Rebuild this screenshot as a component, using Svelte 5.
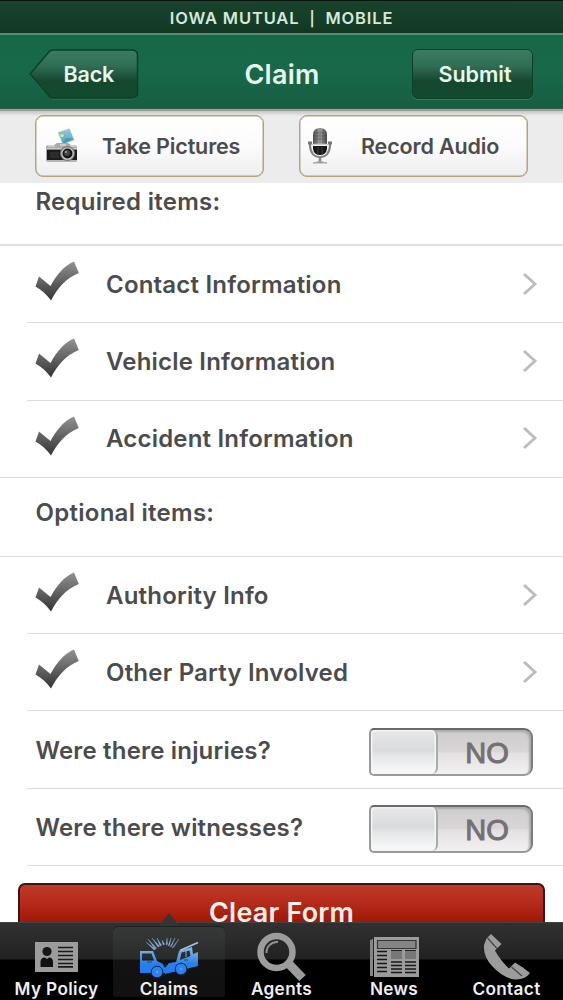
<script>
  const required = ['Contact Information', 'Vehicle Information', 'Accident Information'];
  const optional = ['Authority Info', 'Other Party Involved'];
  const questions = ['Were there injuries?', 'Were there witnesses?'];
  const rays = [[146, 942, 154, 950], [148, 939, 155, 949], [152, 938, 158, 947], [157, 938, 160, 946], [162, 940, 163, 945], [167, 938, 166, 945], [171, 938, 168, 946], [175, 938, 170, 947], [179, 939, 172, 948]];
</script>

{#snippet check()}
  <svg class="check" width="44" height="40" viewBox="0 0 44 40">
    <defs>
      <linearGradient id="ck" x1="0" y1="0" x2="0" y2="1">
        <stop offset="0" stop-color="#929292" /><stop offset=".45" stop-color="#686868" /><stop offset="1" stop-color="#353335" />
      </linearGradient>
    </defs>
    <path fill="url(#ck)" d="M4 15.500 15.500 25C22 13 29 5 39 .5L43.800 12C31 17 22 28 16 39.500 12 34 7 29 .5 25.500Z" />
  </svg>
{/snippet}

{#snippet row(label)}
  <div class="row">
    {@render check()}
    <span class="label">{label}</span>
    <svg class="chev" width="16" height="24" viewBox="0 0 16 24"><path d="M2 2 13 12 2 22" fill="none" stroke="#bcbcbe" stroke-width="2.900" /></svg>
  </div>
{/snippet}

<div class="app">
  <div class="status"><span>IOWA MUTUAL&nbsp; <i>|</i>&nbsp; MOBILE</span></div>
  <header>
    <button class="back">
      <svg width="110" height="52" viewBox="0 0 110 52">
        <defs>
          <linearGradient id="bk" x1="0" y1="0" x2="0" y2="1">
            <stop offset="0" stop-color="#3c7c61" /><stop offset=".32" stop-color="#316f55" /><stop offset=".65" stop-color="#16472f" /><stop offset="1" stop-color="#124a30" />
          </linearGradient>
        </defs>
        <path d="M24 3H102Q108.500 3 108.500 8V46Q108.500 51 102 51H24Q21 51 19 48L1 27 19 6Q21 3 24 3Z" fill="none" stroke="#33805f" />
        <path d="M24 2H102Q108.500 2 108.500 7V45Q108.500 50 102 50H24Q21 50 19 47L1 26 19 5Q21 2 24 2Z" fill="url(#bk)" stroke="#0d4029" stroke-width="1.500" />
      </svg>
      <span>Back</span>
    </button>
    <h1>Claim</h1>
    <button class="submit"><span>Submit</span></button>
  </header>

  <div class="tools">
    <button class="tool">
      <svg class="cam" width="34" height="38" viewBox="0 0 34 38">
        <defs><linearGradient id="sky" x1="0" y1="0" x2="0" y2="1"><stop offset="0" stop-color="#9fc7dc" /><stop offset="1" stop-color="#42a7d5" /></linearGradient></defs>
        <path d="M12 5 25 .5 30 14.500 18 18Z" fill="#f1f1ee" />
        <path d="M13 5.500 24.500 1.500 29 13 18 17Z" fill="url(#sky)" />
        <circle cx="17" cy="8.500" r="1.800" fill="#dce778" /><path d="M18 15 21 11 29 11.500 19 16Z" fill="#4a9aae" />
        <path d="M1 20Q1 18 4 18H9L12 16H23L26 18H30Q32 18 32 21V33Q32 35 29 35H4Q1 35 1 33Z" fill="#aaa" />
        <path d="M2 22H32V33H2Z" fill="#1c1c1c" />
        <path d="M2 22H32M3 19H10M25 19H31M15 18H21" stroke="#eee" stroke-width="1" />
        <path d="M5 25H14V31H5Z" fill="#2d2d2d" /><path d="M2 34H32" stroke="#bdbdbd" stroke-width="1.500" />
        <circle cx="22.500" cy="26.500" r="7.500" fill="#777" /><circle cx="22.500" cy="26.500" r="6.300" fill="#c9c9c9" />
        <circle cx="22.500" cy="26.500" r="5" fill="#151515" /><circle cx="22" cy="26" r="3" fill="#46434a" /><circle cx="21" cy="25" r="1" fill="#aaa" />
      </svg>
      <span>Take Pictures</span>
    </button>
    <button class="tool">
      <svg class="mic" width="24" height="38" viewBox="0 0 24 38">
        <defs><linearGradient id="mc" x1="0" x2="1"><stop offset="0" stop-color="#4c4c4c" /><stop offset=".5" stop-color="#aaa" /><stop offset="1" stop-color="#444" /></linearGradient></defs>
        <path d="M2 17V19Q3 30 12 30T22 19V17" fill="none" stroke="#858585" stroke-width="2.200" />
        <path d="M0 16H4M20 16H24" stroke="#777" stroke-width="3" />
        <path d="M5 8Q5 1 12 1T19 8V17H5Z" fill="url(#mc)" />
        <path d="M6 6H18M5 9H19M5 12H19M9 2V16M12 1V16M15 2V16" stroke="#444" stroke-opacity=".45" />
        <path d="M5 19H19V22Q18 28 12 28T5 22Z" fill="#171717" /><path d="M4 17.500H20" stroke="#ccc" stroke-width="1.500" />
        <path d="M10 20V27M14 20V27" stroke="#444" /><path d="M12 29V35" stroke="#888" stroke-width="2.500" />
        <path d="M5 36Q12 33 19 36Z" fill="#777" stroke="#aaa" />
      </svg>
      <span>Record Audio</span>
    </button>
  </div>

  <main>
    <h2 class="req"><span>Required items:</span></h2>
    {#each required as label}{@render row(label)}{/each}
    <h2 class="opt"><span>Optional items:</span></h2>
    {#each optional as label}{@render row(label)}{/each}
    {#each questions as label}
      <div class="row question">
        <span class="label">{label}</span>
        <div class="switch"><i></i><b>NO</b></div>
      </div>
    {/each}
    <div class="clear-wrap"><button class="clear"><span>Clear Form</span></button></div>
  </main>

  <nav>
    <a class="tab">
      <svg viewBox="0 922 113 56" width="113" height="56">
        <path d="M35 942H78V972H35Z" fill="#9c9c9c" />
        <circle cx="47" cy="951.500" r="4.600" fill="#171717" /><path d="M40.500 967V962Q40.500 957.500 45 957.500L47 959 49 957.500Q53 957.500 53 962V967Z" fill="#111" />
        <path d="M58 947.500H73M58 951.500H73M58 955.500H73M58 959.500H73M58 963.500H73M58 966.800H73" stroke="#1a1a1a" stroke-width="1.700" />
      </svg>
      <span>My Policy</span>
    </a>
    <a class="tab active">
      <i class="notch"></i>
      <svg viewBox="113 922 112 56" width="112" height="56">
        <defs><linearGradient id="blue" gradientUnits="userSpaceOnUse" x1="0" y1="937" x2="0" y2="978"><stop offset="0" stop-color="#b5d2ef" /><stop offset=".45" stop-color="#609fe0" /><stop offset=".65" stop-color="#2580e8" /><stop offset="1" stop-color="#2478ef" /></linearGradient></defs>
        <g fill="url(#blue)">
          {#each rays as r}
            <path d="M{r[0]} {r[1]} {r[2]} {r[3]} {r[2] + 1.600} {r[3] - .800}Z" stroke="#7798bb" stroke-width=".4" />
          {/each}
          <path fill-rule="evenodd" d="M140 951H153L157 961 163 964 164 967 168 969 165 973H140ZM142 953.500V960.500H154L151.500 953.500Z" />
          <path fill-rule="evenodd" d="M179 951 192 947 193 954 198 952V966L165 974 164 969 169 963 176 962ZM181.500 952.500 180 960 190.500 956 189.500 950.500Z" />
        </g>
        <path d="M180 950.500 198 942.500" fill="none" stroke="#9fc4e8" stroke-width="1.800" />
        <path d="M186 951V957" stroke="#81addd" /><path d="M147 962H152M184 960H188" stroke="#164883" />
        <circle cx="157" cy="972" r="5.800" fill="#2880f2" stroke="#142a49" /><circle cx="157" cy="972" r="1.300" fill="#59a4fa" />
        <circle cx="181" cy="969" r="5.800" fill="#2880f2" stroke="#142a49" /><circle cx="181" cy="969" r="1.300" fill="#59a4fa" />
      </svg>
      <span>Claims</span>
    </a>
    <a class="tab">
      <svg viewBox="225 922 113 60" width="113" height="60">
        <circle cx="276.500" cy="952" r="16" fill="none" stroke="#9c9c9c" stroke-width="6.500" />
        <path d="M266.500 953A10.500 10.500 0 0 1 278 942" fill="none" stroke="#929292" stroke-width="2" />
        <path d="M289 964 302.500 978" stroke="#9c9c9c" stroke-width="9" />
      </svg>
      <span>Agents</span>
    </a>
    <a class="tab">
      <svg viewBox="338 922 112 56" width="112" height="56">
        <path d="M370 940 373 939V976H370Z" fill="#858585" /><path d="M374 937H419V977H374Z" fill="#9c9c9c" />
        <path d="M377.500 940.500H416V948.500H377.500Z" fill="#858585" stroke="#353535" stroke-width="1.200" />
        <path d="M391 951H402V959H391ZM405 951H416V959H405Z" fill="#787878" />
        <path d="M377 951.500H387M377 955.500H387M377 959.500H387M377 963.500H387M377 967.500H387M377 971.500H387M391 962H402M391 965.500H402M391 969H402M391 972.500H402M405 962H416M405 965.500H416M405 969H416M405 972.500H416" stroke="#171717" stroke-width="1.600" />
        <path d="M391 950.500H402M405 950.500H416" stroke="#222" />
      </svg>
      <span>News</span>
    </a>
    <a class="tab">
      <svg viewBox="450 922 113 60" width="113" height="60">
        <path d="M486.500 938.500 491 934 501.500 944 495 950.500Q500 960 509 968.500L515 962.500Q523 967 530 973 525 980 515 979.500 503 978 492 966 483 956 484 945Z" fill="#9c9c9c" />
        <path d="M487.500 938 497 948.500M511.500 967 522 976" stroke="#484848" stroke-width="1.300" />
      </svg>
      <span>Contact</span>
    </a>
  </nav>
</div>

<style>
  :global(body) { background: #fff; }
  .app { width: 563px; height: 1000px; display: flex; flex-direction: column; overflow: hidden; background: #fff; font-family: Inter, sans-serif; color: #4c4b4d; font-weight: 600; }
  button { font: inherit; color: inherit; padding: 0; border: 0; background: none; box-sizing: border-box; }
  span { white-space: nowrap; }
  .status { height: 33px; flex: none; display: flex; justify-content: center; align-items: center; box-sizing: border-box; padding-top: 2px; border-top: 1px solid #07150e; background: linear-gradient(#19432d, #123824); color: #d5e8da; font-size: 16.500px; letter-spacing: .85px; }
  .status i { font-style: normal; font-size: 14.500px; }
  header { height: 76px; flex: none; box-sizing: border-box; border-top: 2px solid #578d75; border-bottom: 1px solid #315f4a; background: linear-gradient(#176846, #18694a 45%, #175d41); display: grid; grid-template-columns: 139px 1fr 121px; padding: 13px 29px 0; color: #e7f7eb; }
  .back { display: grid; width: 110px; height: 52px; }
  .back svg, .back span { grid-area: 1 / 1; }
  .back span { padding: 12px 0 0 34.500px; text-align: left; font-size: 21.500px; letter-spacing: -.15px; line-height: 28px; }
  h1 { margin: 0; font-size: 27px; line-height: 54px; text-align: center; font-weight: 600; padding-right: 17px; letter-spacing: .25px; }
  .submit { width: 121px; height: 50px; margin: 1px 0 0 -1px; border-radius: 6px; border: 1.500px solid #0d4029; background: linear-gradient(#3c7c61, #316f55 32%, #16472f 65%, #124a30); box-shadow: 0 1px #33805f; font-size: 21.500px; letter-spacing: 0; padding: 0 0 0 5px; }
  .tools { height: 74px; flex: none; box-sizing: border-box; border-top: 2px solid #989e9a; background: linear-gradient(#c5c5c5, #ececec 5px); display: flex; gap: 35px; padding: 4px 35px 0; }
  .tool { width: 229px; height: 62px; border: 1.500px solid #b5a27f; box-shadow: inset 0 0 0 .5px #b5a27f; border-radius: 8px; background: linear-gradient(#fff, #fbfbfb 50%, #eeeeef); display: flex; align-items: center; font-size: 21.500px; letter-spacing: -.15px; }
  .tool span { margin-top: -1px; }
  .cam { margin: 0 23px 0 9px; }
  .mic { margin: 0 29px 0 8px; }
  main { flex: 1; min-height: 0; overflow: hidden; }
  h2 { margin: 0; box-sizing: border-box; padding-left: 35.500px; font-size: 24px; font-weight: 600; letter-spacing: .27px; border-bottom: 2px solid #dfdfdf; }
  .req { height: 63px; line-height: 38px; }
  .opt { height: 79px; line-height: 70px; border-bottom-width: 1px; }
  .row { height: 77.300px; box-sizing: border-box; margin-left: 27px; padding: 0 25px 0 8px; display: flex; align-items: center; border-bottom: 1.500px solid #dcdcdd; font-size: 24px; letter-spacing: .2px; }
  .row:nth-child(4) { margin-left: 0; padding-left: 35px; }
  .check { margin-right: 27px; margin-top: -6px; }
  .row .chev { margin: -1px 0 0 auto; }
  .question { padding: 0 30px 0 8.500px; }
  .question .label { margin-top: 1px; letter-spacing: .18px; }
  .switch { margin: 5px 0 0 auto; width: 164px; height: 48px; box-sizing: border-box; border: 2px solid #9a9a9c; border-top-color: #69696b; border-right-color: #7d7d7f; border-radius: 5px 9px 9px 5px; background: linear-gradient(#cfcccd, #d9d6d7 50%, #e3e0e1 52%, #f2f1f2); display: flex; box-shadow: inset -2px 2px 2px #aaa; }
  .switch i { width: 67px; box-sizing: border-box; border-right: 2px solid #aaa; border-radius: 4px 6px 6px 4px; background: linear-gradient(#e8e8ea, #d9dadc 45%, #e5e7e8 60%, #fbfbfb); box-shadow: inset 0 0 0 1.500px #f4f4f5; }
  .switch b { flex: 1; text-align: center; padding-left: 5px; letter-spacing: 0; font: 500 29px/46px "Liberation Sans", Arial, sans-serif; color: #737173; -webkit-text-stroke: 1px #737173; }
  .clear-wrap { padding: 17px 18px 0; }
  .clear { width: 527px; height: 60px; border: 2px solid #391716; border-radius: 7px; background: linear-gradient(#c0392a, #b42818 20px, #9d1604 38px); color: #fff0ed; font-size: 27px; letter-spacing: .2px; display: flex; justify-content: center; align-items: flex-start; line-height: 56px; overflow: hidden; }
  nav { height: 78px; flex: none; position: relative; display: grid; grid-template-columns: 113px 112px 113px 112px 113px; background: linear-gradient(#313131, #222 37px, #000 38px); box-shadow: inset 0 1px #424242; }
  .tab { position: relative; display: flex; flex-direction: column; align-items: center; justify-content: flex-end; height: 78px; color: #eee; font-size: 17.200px; line-height: 22px; }
  .tab svg { position: absolute; left: 0; top: 0; }
  .tab span { position: relative; letter-spacing: .35px; }
  .active::before { content: ""; position: absolute; inset: 4px 0 3px; border-radius: 5px 5px 3px 3px; background: linear-gradient(#373a39, #292b2b 33px, #121212 34px, #111); box-shadow: inset 0 1px #202020; }
  .notch { position: absolute; left: 46px; top: -9px; width: 20px; height: 13px; background: #333635; clip-path: polygon(50% 0, 100% 100%, 0 100%); }
</style>
